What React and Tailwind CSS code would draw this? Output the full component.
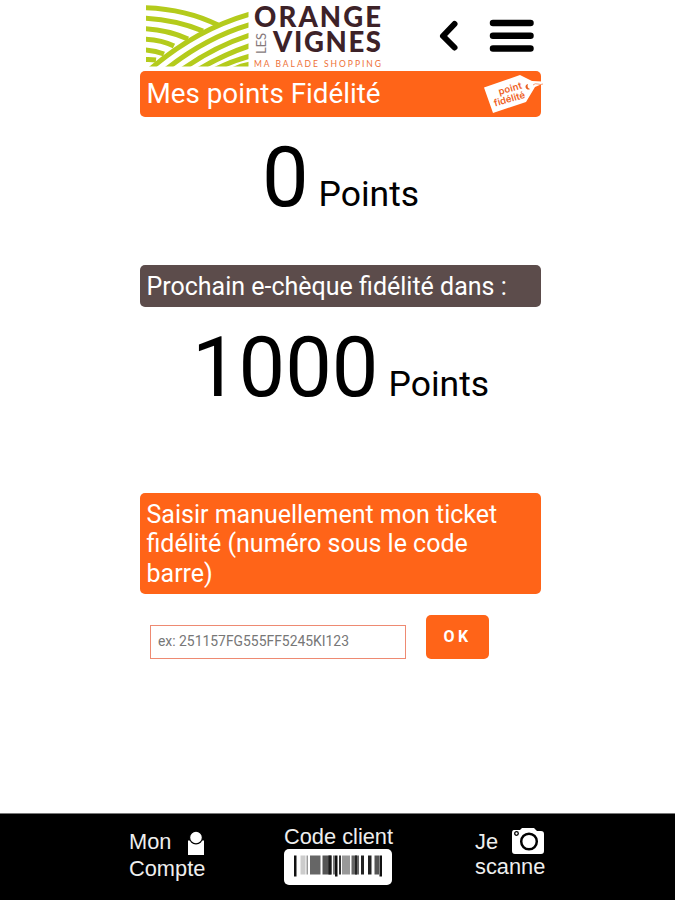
const leftRows = [
  "M140 7.500 Q184 8 218 25",
  "M140 18 Q174 19 203 31",
  "M140 28.500 Q166 29 188 39",
  "M140 39 Q160 39 174 46",
  "M140 49.500 Q154 50 164 54",
  "M140 60 Q148 59 156 60",
];

const rightRows = [
  "M252 13.500 Q196 29 148 71",
  "M252 24 Q206 37 164 71",
  "M252 34.500 Q215 46 180 71",
  "M252 45 Q224 54 196 71",
  "M252 55.500 Q231 61 212 71",
  "M252 64 Q240 65 231 71",
];

// x offset, width, height, colour
const bars = [
  [10, 2.5, 21, "#111"], [16.5, 5, 19, "#ccc"], [22.5, 1.5, 19, "#999"], [26, 10.5, 19, "#666"],
  [38.5, 9, 19, "#555"], [44.5, 3, 19, "#1a1a1a"], [49, 2, 19, "#777"], [51, 2.5, 21, "#111"],
  [55, 2, 19, "#333"], [58, 8, 19, "#999"], [67.5, 7.5, 19, "#666"], [71, 2, 19, "#222"],
  [77, 3, 19, "#222"], [84, 3.5, 19, "#222"], [90.5, 4.5, 19, "#555"], [95.5, 2.5, 21, "#111"],
];

const Logo = () => (
  <svg width="241" height="71" viewBox="143 0 241 71" className="shrink-0">
    <clipPath id="hills"><rect x="146" y="5" width="102.500" height="61.500" /></clipPath>
    <g clipPath="url(#hills)" fill="none" stroke="#b4cb1c" strokeWidth="5">
      {leftRows.map((d) => <path key={d} d={d} />)}
      {rightRows.map((d) => <path key={d} d={d} />)}
    </g>
    <g fontFamily="Lato, sans-serif" fontWeight="900" fill="#3d2228" fontSize="27.500">
      <text x="254" y="26.500" textLength="127">ORANGE</text>
      <text x="273" y="52" textLength="108">VIGNES</text>
    </g>
    <text transform="translate(266 54) rotate(-90)" fontFamily="Lato, sans-serif" fontSize="13" fill="#85797b" textLength="21">LES</text>
    <text x="254" y="66.500" fontFamily="Lato, sans-serif" fontSize="8.500" fill="#ee7035" textLength="127">MA BALADE SHOPPING</text>
  </svg>
);

const Tag = () => (
  <svg width="63" height="45" viewBox="480 71 63 45" className="absolute right-[-3px] top-0">
    <path d="M483 87.500 L519 75 Q525 78 531 81 L541 81.500 V84 L534 87 L525 102 L492 113 Z" fill="#fff" />
    <path d="M527 84 a2.800 2.800 0 1 0 2 5 Q525.500 88 527 84Z" fill="#e85f20" />
    <path d="M532 85 Q534 83 537 84 T542 84" fill="none" stroke="#f58c5a" strokeWidth=".8" />
    <g fontFamily="Inter, sans-serif" fontWeight="600" fontSize="9.500" fill="#ee6125">
      <text transform="translate(498.500 95) rotate(-16)" textLength="24">point</text>
      <text transform="translate(494 106.500) rotate(-16)" textLength="32">fidélité</text>
    </g>
  </svg>
);

const Panel = ({ children, className = "" }) => (
  <div className={`relative rounded-[5px] px-[6.5px] text-white ${className}`}>{children}</div>
);

const Score = ({ value, className = "" }) => (
  <p className={`flex items-baseline justify-center text-black ${className}`}>
    <span className="text-[83px] leading-[84px]">{value}</span>
    <span className="ml-[10px] text-[35.5px] leading-[36px]">Points</span>
  </p>
);

const Footer = () => (
  <footer className="flex h-[87px] border-t border-[#777] bg-black font-['Liberation_Sans',sans-serif] text-[21.8px] leading-[26px] text-[#eee]">
    <div className="ml-[129px] w-[155px] pt-[15px]">
      <div className="flex">
        <span>Mon</span>
        <svg width="18" height="25" viewBox="0 0 18 25" className="ml-[16px] mt-[2px]" fill="#fff">
          <path d="M1 9.500 H17 V24 H1Z" />
          <circle cx="9" cy="6.500" r="6.400" stroke="#000" strokeWidth="1.200" />
        </svg>
      </div>
      <div>Compte</div>
    </div>
    <div className="w-[191px] pt-[10px]">
      <div>Code client</div>
      <svg width="109" height="37" viewBox="0 0 109 37" className="-mt-px">
        <rect width="108" height="36" rx="5" fill="#fff" />
        {bars.map(([x, w, h, fill]) => <rect key={x} x={x} y="6.500" width={w} height={h} fill={fill} />)}
      </svg>
    </div>
    <div className="pt-[15px]">
      <div className="flex">
        <span>Je</span>
        <svg width="34" height="28" viewBox="0 0 34 28" className="-mb-[2px] ml-[13px] -mt-[2px]">
          <path d="M3 3 H9 L11 1 H23 L26 4 H30 Q33 4 33 7 V24 Q33 27 30 27 H4 Q1 27 1 24 V6 Q1 3 3 3Z" fill="#fff" />
          <circle cx="18" cy="14.500" r="7.800" fill="#fff" stroke="#000" strokeWidth="2.500" />
          <circle cx="5.500" cy="6.500" r="1.800" fill="none" stroke="#000" strokeWidth="1.300" />
        </svg>
      </div>
      <div className="-mt-px">scanne</div>
    </div>
  </footer>
);

export default function App() {
  return (
    <div className="flex h-[900px] w-[675px] flex-col overflow-hidden bg-white font-[Roboto,sans-serif]">
      <main className="ml-[140px] w-[401px] flex-1">
        <header className="flex h-[71px] pl-[3px]">
          <Logo />
          <svg width="22" height="34" viewBox="0 0 22 34" className="ml-[54px] mt-[19px]" fill="none" stroke="#000" strokeWidth="6" strokeLinecap="round" strokeLinejoin="round">
            <path d="M16.500 5 L5 17 L16.500 28.500" />
          </svg>
          <svg width="46" height="34" viewBox="0 0 46 34" className="ml-[28.5px] mt-[19px]" stroke="#000" strokeWidth="6.500" strokeLinecap="round">
            <path d="M4 4 H41.500 M4 16.800 H41.500 M4 29.500 H41.500" />
          </svg>
        </header>

        <Panel className="h-[46px] bg-[#ff6418] text-[27.8px] leading-[46px]">
          Mes points Fidélité
          <Tag />
        </Panel>
        <Score value="0" className="h-[148px] pt-[19px]" />

        <Panel className="h-[42px] bg-[#5c4c4b] text-[25px] leading-[43px]">
          Prochain e-chèque fidélité dans :
        </Panel>
        <Score value="1000" className="h-[186px] pt-[19px]" />

        <Panel className="h-[101px] bg-[#ff6418] pt-[7px] text-[25px] leading-[29.3px]">
          Saisir manuellement mon ticket<br />fidélité (numéro sous le code<br />barre)
        </Panel>

        <form className="flex items-end pl-[10px] pt-[21px]">
          <input
            placeholder="ex: 251157FG555FF5245KI123"
            className="h-[34px] w-[256px] border border-[#ee8a72] px-[7px] pb-[2px] text-[13.9px] text-[#777] placeholder:text-[#777] placeholder:opacity-100"
          />
          <button type="button" className="ml-[20px] h-[44px] w-[63px] rounded-[5px] bg-[#ff6418] text-[16px] font-bold tracking-[3.5px] text-white">
            OK
          </button>
        </form>
      </main>
      <Footer />
    </div>
  );
}
